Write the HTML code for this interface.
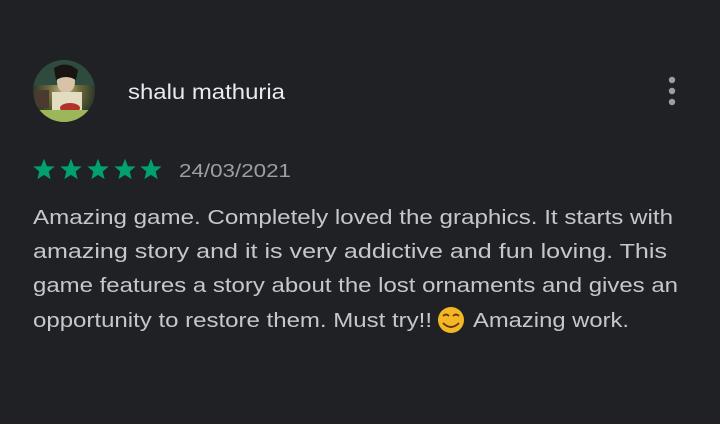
<!DOCTYPE html>
<html><head><meta charset="utf-8"><style>
html,body{margin:0;padding:0;background:#202124;width:720px;height:424px;overflow:hidden}
svg text{font-family:"Liberation Sans",Arial,sans-serif}
</style></head><body>
<svg width="720" height="424" viewBox="0 0 720 424" xmlns="http://www.w3.org/2000/svg">
<rect width="720" height="424" fill="#202124"/>
<defs>
<radialGradient id="av" cx="50%" cy="50%" r="50%">
<stop offset="0" stop-color="#c9b48a"/><stop offset="0.5" stop-color="#6d6a3a"/><stop offset="1" stop-color="#2c3a28"/>
</radialGradient>
<clipPath id="c"><circle cx="64" cy="91" r="31"/></clipPath>
</defs>
<circle cx="64" cy="91" r="31" fill="url(#av)"/>
<g clip-path="url(#c)">
<rect x="33" y="60" width="62" height="25" fill="#2f4a3f"/>
<ellipse cx="66" cy="82" rx="9" ry="11" fill="#d8c2a8"/>
<path d="M54 68 q12 -8 24 2 l-2 10 q-10 -6 -20 0z" fill="#1a1410"/>
<rect x="52" y="92" width="30" height="22" fill="#e2dcc0"/>
<ellipse cx="70" cy="108" rx="10" ry="5" fill="#b2322a"/>
<rect x="33" y="110" width="62" height="12" fill="#9cb65a"/>
<rect x="35" y="90" width="14" height="18" fill="#4a3a30"/>
</g>
<text x="128" y="99" font-size="21.5" fill="#e8eaed" textLength="157" lengthAdjust="spacingAndGlyphs">shalu mathuria</text>
<circle cx="672" cy="80" r="3.2" fill="#9aa0a6"/>
<circle cx="672" cy="91" r="3.2" fill="#9aa0a6"/>
<circle cx="672" cy="102" r="3.2" fill="#9aa0a6"/>
<g fill="#01a071">
<path id="st" d="M0 -10 L2.6 -3.4 L9.5 -3.1 L4.2 1.3 L5.9 8.1 L0 4.3 L-5.9 8.1 L-4.2 1.3 L-9.5 -3.1 L-2.6 -3.4Z" transform="translate(44 170) scale(1.12)"/>
<use href="#st" x="27"/><use href="#st" x="54"/><use href="#st" x="81"/><use href="#st" x="107"/>
</g>
<text x="179" y="177" font-size="18.5" fill="#9aa0a6" textLength="112" lengthAdjust="spacingAndGlyphs">24/03/2021</text>
<g font-size="20.5" fill="#c4c7cc">
<text x="33" y="224" textLength="640" lengthAdjust="spacingAndGlyphs">Amazing game. Completely loved the graphics. It starts with</text>
<text x="33" y="258" textLength="634" lengthAdjust="spacingAndGlyphs">amazing story and it is very addictive and fun loving. This</text>
<text x="33" y="292" textLength="645" lengthAdjust="spacingAndGlyphs">game features a story about the lost ornaments and gives an</text>
<text x="33" y="327" textLength="399" lengthAdjust="spacingAndGlyphs">opportunity to restore them. Must try!!</text>
<text x="473" y="327" textLength="156" lengthAdjust="spacingAndGlyphs">Amazing work.</text>
</g>
<circle cx="451" cy="320" r="13" fill="#f5b625"/>
<path d="M443 316 q3 -3 6 0 M453 316 q3 -3 6 0" stroke="#5a3a10" stroke-width="1.8" fill="none"/>
<path d="M443 323 q8 8 16 0" stroke="#5a3a10" stroke-width="1.8" fill="none"/>
</svg>
</body></html>
